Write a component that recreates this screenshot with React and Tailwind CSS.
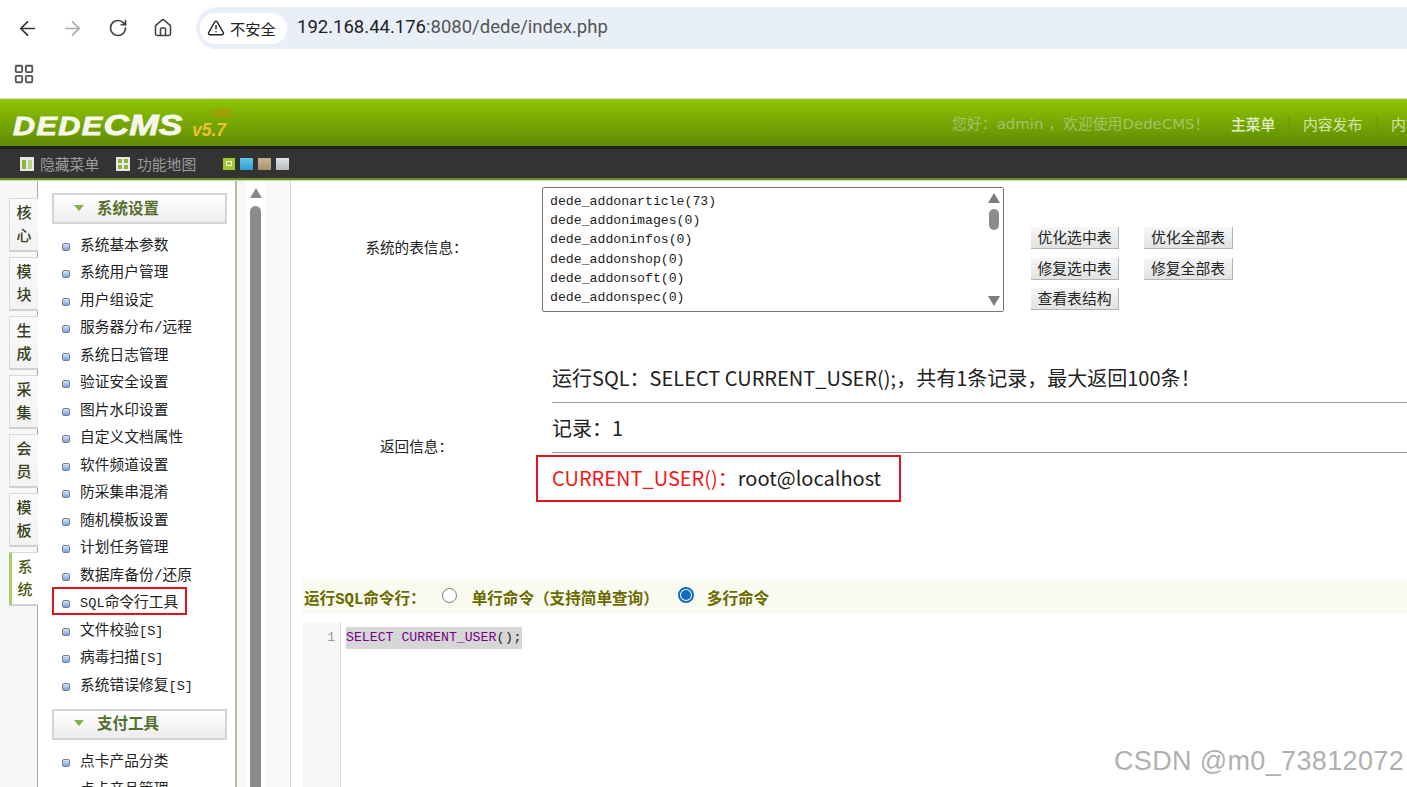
import React from "react";
import { ArrowLeft, ArrowRight, RotateCw, House, TriangleAlert, LayoutGrid } from "lucide-react";

const CJK = "font-['Noto_Sans_CJK_SC',sans-serif]";
const MONO = "font-['Liberation_Mono','Noto_Sans_CJK_SC',monospace]";

const tabs = ["核心", "模块", "生成", "采集", "会员", "模板", "系统"];
const items = ["系统基本参数", "系统用户管理", "用户组设定", "服务器分布/远程", "系统日志管理", "验证安全设置", "图片水印设置", "自定义文档属性", "软件频道设置", "防采集串混淆", "随机模板设置", "计划任务管理", "数据库备份/还原", "SQL命令行工具", "文件校验[S]", "病毒扫描[S]", "系统错误修复[S]"];
const tables = ["dede_addonarticle(73)", "dede_addonimages(0)", "dede_addoninfos(0)", "dede_addonshop(0)", "dede_addonsoft(0)", "dede_addonspec(0)", "dede_admin(1)"];

function Bullet() {
  return <span className="w-[8px] h-[8px] shrink-0 rounded-[2px] border border-[#75808e] bg-gradient-to-b from-[#d5e3f8] to-[#7aa3e4] mt-[2px]" />;
}

function MenuItem({ label, boxed }) {
  const parts = label.split(/([A-Z\[\]]+)/).filter(Boolean);
  return (
    <div className={`relative flex items-center h-[27.5px] pl-[10px] gap-[10px] text-[14.7px] text-[#222] ${MONO}`}>
      <Bullet />
      <span className="tracking-[0.05px]">
        {parts.map((p, i) => /[A-Z\[\]]/.test(p) ? <span key={i} className="text-[13.6px]">{p}</span> : <span key={i}>{p}</span>)}
      </span>
      {boxed && <span className="absolute left-0 top-[-3px] w-[135px] h-[28px] border-2 border-[#e3141d]" />}
    </div>
  );
}

function MenuHead({ label }) {
  return (
    <div className={`flex items-center h-[31px] pb-[2px] border-2 border-[#d4d4d4] bg-gradient-to-b from-white to-[#ececec] pl-[20px] gap-[13px] text-[15.5px] font-bold text-[#54702c] ${CJK}`}>
      <svg width="10" height="6" viewBox="0 0 10 6"><path d="M0 0h10L5 6z" fill="#7fb04a" /></svg>
      <span>{label}</span>
    </div>
  );
}

function Btn({ children }) {
  return (
    <span className={`inline-flex items-center justify-center w-full h-[22px] bg-gradient-to-b from-[#f6f6f6] to-[#e2e2e2] border-r border-b border-[#b5b5b5] text-[14.8px] text-[#222] ${CJK}`}>
      {children}
    </span>
  );
}

export default function App() {
  return (
    <div className={`relative w-[1407px] h-[787px] overflow-hidden bg-white ${CJK}`}>
      {/* browser toolbar */}
      <div className="h-[56px] flex items-start pt-[7px] text-[#444]">
        <div className="w-[196px] h-[42px] flex items-center pl-[16px]">
          <ArrowLeft size={23} strokeWidth={1.8} className="text-[#333]" />
          <ArrowRight size={23} strokeWidth={1.8} className="text-[#aaa] ml-[22px]" />
          <RotateCw size={20} strokeWidth={2} className="text-[#444] ml-[24px]" />
          <House size={20} strokeWidth={1.9} className="text-[#444] ml-[25px]" />
        </div>
        <div className="flex-1 h-[42px] rounded-l-[21px] bg-[#e9eff9] flex items-center pl-[4px]">
          <div className="w-[87px] h-[31px] rounded-full bg-white flex items-center pl-[7px] gap-[5px]">
            <TriangleAlert size={18} strokeWidth={2} className="text-[#222]" />
            <span className="text-[15.3px] text-[#222]">不安全</span>
          </div>
          <span className="ml-[10px] text-[18.5px] font-['Roboto',sans-serif] text-[#1f1f1f]">
            192.168.44.176<span className="text-[#555]">:8080/dede/index.php</span>
          </span>
        </div>
      </div>
      {/* bookmarks */}
      <div className="h-[43px] flex items-center pl-[13px] pb-[6px] border-b border-[#e3e3e3]">
        <LayoutGrid size={22} strokeWidth={2} className="text-[#555]" />
      </div>
      {/* green header */}
      <div className="h-[47px] flex items-center justify-between bg-gradient-to-b from-[#8fc500] to-[#5f8b06]">
        <div className="relative w-[240px] h-full">
          <span className="absolute left-[13px] top-[11px] text-[25px] leading-[30px] font-['Liberation_Sans',sans-serif] font-bold italic text-[#f4f7ea] tracking-[1.2px] scale-x-[1.22] origin-left [-webkit-text-stroke:0.9px_#f4f7ea] whitespace-nowrap">
            DEDE<span className="text-[29px] tracking-[0px]">CMS</span>
          </span>
          <span className="absolute left-[192px] top-[21px] text-[17.5px] leading-[20px] font-['Liberation_Sans',sans-serif] font-bold italic text-[#ecc22d]">v5.7</span>
          <span className="absolute left-[212px] top-[9px] text-[10px] leading-[11px] font-['Liberation_Sans',sans-serif] text-[#d9761a]">SP2</span>
        </div>
        <div className="flex items-center h-full pt-[3px] text-[15px] whitespace-nowrap w-[455px] shrink-0 overflow-hidden">
          <span className="text-[#a3c46b] font-['DejaVu_Sans','Noto_Sans_CJK_SC',sans-serif] text-[14.9px] w-[279px] shrink-0 whitespace-nowrap overflow-hidden">您好：admin ，欢迎使用DedeCMS！</span>
          <span className="text-[#e3efc4] font-medium w-[58px] shrink-0 text-[14.8px]">主菜单</span>
          <span className="w-px h-[18px] bg-[#6a9414] mr-[13px] shrink-0" />
          <span className="text-[#d6e6ab] w-[74px] shrink-0 text-[14.8px]">内容发布</span>
          <span className="w-px h-[18px] bg-[#6a9414] mr-[13px] shrink-0" />
          <span className="text-[#d6e6ab] text-[14.8px]">内容维护</span>
        </div>
      </div>
      {/* dark bar */}
      <div className="h-[34px] flex items-center pl-[20px] bg-[#333] border-t-[3px] border-t-[#232323] border-b-2 border-b-[#6e8a2a] text-[14.8px] text-[#9c9c9c]">
        <svg width="14" height="14" viewBox="0 0 14 14" className="mr-[6px]"><rect width="14" height="14" fill="#e8e8e8" /><rect x="2" y="3" width="4" height="9" fill="#8ab83a" /><rect x="8" y="3" width="4" height="9" fill="#b9d47e" /></svg>
        <span className="w-[60px] whitespace-nowrap pt-[2px]">隐藏菜单</span>
        <svg width="14" height="14" viewBox="0 0 14 14" className="ml-[16px] mr-[7px]"><rect width="14" height="14" fill="#e8e8e8" /><path d="M2 2h4v4H2zM8 2h4v4H8zM2 8h4v4H2zM8 8h4v4H8z" fill="#8ab83a" /></svg>
        <span className="w-[60px] whitespace-nowrap pt-[2px]">功能地图</span>
        <span className="ml-[26px] w-[12px] h-[12px] bg-[#9ccb2a] flex items-center justify-center"><span className="w-[6px] h-[5px] border border-white" /></span>
        <span className="ml-[5px] w-[13px] h-[12px] bg-gradient-to-b from-[#62c4ea] to-[#2c9ed2]" />
        <span className="ml-[5px] w-[13px] h-[12px] bg-gradient-to-b from-[#c9b48d] to-[#a89268]" />
        <span className="ml-[5px] w-[13px] h-[12px] bg-gradient-to-b from-[#e2e4e6] to-[#b7bcc1]" />
      </div>
      <div className="h-px bg-[#c9d9a8]" />
      {/* body */}
      <div className="flex h-[606px]">
        {/* tabs */}
        <div className="w-[38px] shrink-0 bg-[#f7f7f7] border-r border-[#a9ad93] pl-[9px] pt-[17px] flex flex-col gap-[5px]">
          {tabs.map((t, i) => (
            <div key={t} className={`w-[29px] h-[54px] pb-[3px] flex flex-col items-center justify-center leading-[23px] text-[15px] ${i === 6 ? "border-l-[3px] border-l-[#a8cf62] bg-white text-[#4d5a12] font-medium" : "border-l border-l-[#dcdcdc] bg-gradient-to-b from-[#fafafa] to-[#f2f2f2] text-[#33401a] font-medium"} border-t border-t-[#d9d9d9] border-b-2 border-b-[#d0d0d0]`}>
              <span>{t[0]}</span>
              <span>{t[1]}</span>
            </div>
          ))}
        </div>
        {/* menu */}
        <div className="w-[199px] shrink-0 border-r-2 border-[#b7baa3] pl-[14px] pr-[8px] pt-[12px]">
          <MenuHead label="系统设置" />
          <div className="mt-[8px]">
            {items.map((it) => <MenuItem key={it} label={it} boxed={it.startsWith("SQL")} />)}
          </div>
          <div className="mt-[9px]"><MenuHead label="支付工具" /></div>
          <div className="mt-[9px]">
            <MenuItem label="点卡产品分类" />
            <MenuItem label="点卡产品管理" />
          </div>
        </div>
        {/* outer scrollbar */}
        <div className="w-[54px] shrink-0 flex bg-[#f8f8f8] border-r border-[#d8d8d8]">
          <div className="ml-[9px] w-[19px] bg-white flex flex-col items-center pt-[7px] gap-[8px]">
            <svg width="12" height="10" viewBox="0 0 12 10" className="shrink-0"><path d="M6 0l6 10H0z" fill="#8c8c8c" /></svg>
            <div className="w-[11px] flex-1 rounded-t-[6px] bg-[#8c8c8c]" />
          </div>
        </div>
        {/* main */}
        <div className="flex-1 min-w-0 relative pt-[6px]">
          <div className="flex h-[129px]">
            <div className={`w-[251px] shrink-0 text-center pt-[49px] text-[14.6px] text-[#222] ${CJK}`}>系统的表信息：</div>
            <div className={`w-[462px] h-[125px] shrink-0 relative overflow-hidden border border-[#767676] rounded-[2px] pl-[7px] pt-[4px] text-[13.2px] leading-[19.2px] text-[#222] ${MONO}`}>
              {tables.map((t) => <div key={t}>{t}</div>)}
              <div className="absolute right-0 top-0 bottom-0 w-[18px] bg-white flex flex-col items-center pt-[5px] pb-[5px]">
                <svg width="12" height="10" viewBox="0 0 12 10" className="shrink-0"><path d="M6 0l6 10H0z" fill="#7d7d7d" /></svg>
                <div className="mt-[6px] w-[10px] h-[21px] rounded-[5px] bg-[#8c8c8c]" />
                <svg width="12" height="10" viewBox="0 0 12 10" className="shrink-0 mt-auto"><path d="M0 0h12L6 10z" fill="#7d7d7d" /></svg>
              </div>
            </div>
            <div className="ml-[27px] pt-[40px] grid grid-cols-[88px_89px] gap-x-[25px] gap-y-[8.5px] content-start">
              <Btn>优化选中表</Btn><Btn>优化全部表</Btn>
              <Btn>修复选中表</Btn><Btn>修复全部表</Btn>
              <Btn>查看表结构</Btn>
            </div>
          </div>
          <div className="flex h-[263px]">
            <div className={`w-[245px] shrink-0 pl-[6px] text-center pt-[119px] text-[14.6px] text-[#222] ${CJK}`}>返回信息：</div>
            <div className="flex-1 min-w-0 text-[20px] text-[#222] whitespace-nowrap">
              <div className="ml-[16px] mt-[37px] h-[50px] border-b border-[#9a9a9a] pt-[10px] leading-[30px]">运行SQL：SELECT CURRENT_USER();，共有1条记录，最大返回100条！</div>
              <div className="ml-[16px] h-[50px] border-b border-[#9a9a9a] pt-[10px] leading-[30px]">记录：1</div>
              <div className="relative mt-[2px] w-[365px] h-[47px] border-2 border-[#e3141d] pl-[14px] pt-[6px] leading-[30px]">
                <span className="text-[#f01919]">CURRENT_USER()：</span>root@localhost
              </div>
            </div>
          </div>
          <div className={`ml-[11px] h-[35px] pt-[9px] bg-[#f9fbf0] flex items-center text-[15.6px] font-bold text-[#6b6a00] whitespace-nowrap ${MONO}`}>
            <span className="ml-[2px]">运行SQL命令行：</span>
            <span className="ml-[16px] w-[15px] h-[15px] rounded-full border border-[#767676] bg-white mb-[12px]" />
            <span className="ml-[15px]">单行命令（支持简单查询）</span>
            <span className="ml-[19px] w-[16px] h-[16px] rounded-full border-2 border-[#0f6cbd] bg-white flex items-center justify-center mb-[12px]"><span className="w-[10px] h-[10px] rounded-full bg-[#0f6cbd]" /></span>
            <span className="ml-[13px]">多行命令</span>
          </div>
          <div className="ml-[12px] mt-[8px] flex h-[200px]">
            <div className={`w-[38px] bg-[#f7f7f7] border-r border-[#ddd] text-right pr-[5px] pt-[6px] text-[13px] leading-[19px] text-[#999] ${MONO}`}>1</div>
            <div className={`ml-[5px] mt-[5px] h-[22px] px-0 bg-[#d6d6d6] text-[13.2px] leading-[22px] whitespace-pre ${MONO}`}>
              <span className="text-[#770088]">SELECT CURRENT_USER</span><span className="text-[#222] tracking-[0.7px]">();</span>
            </div>
          </div>
        </div>
      </div>
      <span className="absolute left-[1114px] top-[742px] text-[27px] leading-[38px] tracking-[0.35px] text-[#9a9a9a]/80 font-['Liberation_Sans',sans-serif] whitespace-nowrap">CSDN @m0_73812072</span>
    </div>
  );
}
